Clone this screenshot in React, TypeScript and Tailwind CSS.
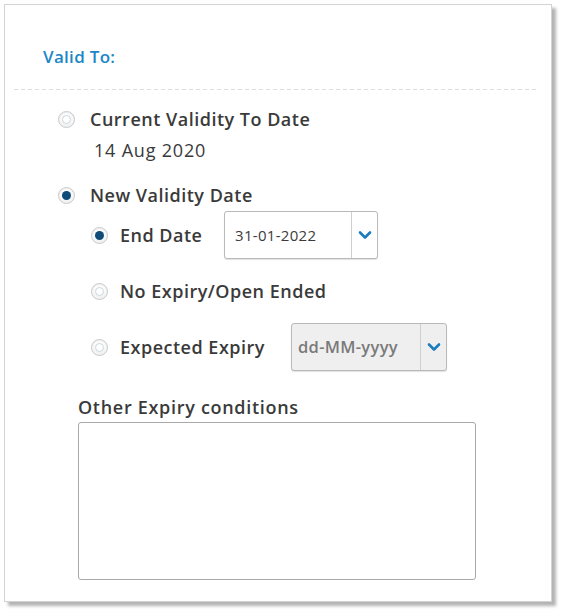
const font = { fontFamily: '"Open Sans", "Liberation Sans", sans-serif' }

function Radio({ checked }: { checked?: boolean }) {
  return (
    <span className="inline-flex size-[17px] shrink-0 items-center justify-center rounded-full border border-[#c9c9c9] bg-gradient-to-b from-white to-[#f1f1f1] shadow-[inset_0_1px_1px_rgba(0,0,0,0.08)]">
      {checked ? (
        <span className="size-[9px] rounded-full bg-[#0e4b79]" />
      ) : (
        <span className="size-[9px] rounded-full border-[1.5px] border-[#c9d7e0] bg-white" />
      )}
    </span>
  )
}

function Chevron() {
  return (
    <svg width="14" height="10" viewBox="0 0 14 10" fill="none">
      <path d="M2 2.5 L7 7.5 L12 2.5" stroke="#1b7cbf" strokeWidth="2.6" strokeLinecap="round" strokeLinejoin="round" />
    </svg>
  )
}

function DateSelect({ value, disabled, width }: { value: string; disabled?: boolean; width: string }) {
  return (
    <div
      className={`flex h-[48px] items-stretch rounded-[3px] border border-[#b9b9b9] shadow-[0_1px_1px_rgba(0,0,0,0.12)] ${width} ${
        disabled ? 'bg-[#efefef]' : 'bg-white'
      }`}
    >
      <div
        className={`flex flex-1 items-center ${
          disabled
            ? 'pl-[6px] text-[16.5px] font-semibold tracking-[0.3px] text-[#7a7a7a]'
            : 'pl-[10px] text-[15px] tracking-[0.3px] text-[#3b3b3b]'
        }`}
      >
        {value}
      </div>
      <div className="flex w-[26px] items-center justify-center border-l border-[#cfcfcf]">
        <Chevron />
      </div>
    </div>
  )
}

export default function App() {
  return (
    <div className="min-h-[616px] bg-white" style={font}>
      <div className="ml-[4px] mt-[4px] h-[598px] w-[548px] border border-[#d3d3d3] bg-white shadow-[4px_4px_3px_#b4b4b4]">
        <div className="pl-[38px] pt-[42px] text-[17px] font-semibold leading-[20px] tracking-[0.3px] text-[#1c87c7]">
          Valid To:
        </div>

        <div className="ml-[9px] mr-[14px] mt-[22px] h-px bg-[repeating-linear-gradient(90deg,#dddddd_0_4px,transparent_4px_7px)]" />

        <div className="pl-[53px] text-[18px] tracking-[0.5px] text-[#3a3a3a]">
          <div className="mt-[17px] flex h-[24px] items-center gap-[15px]">
            <Radio />
            <span className="font-semibold">Current Validity To Date</span>
          </div>
          <div className="mt-[7px] flex h-[24px] items-center pl-[36px] tracking-[0.8px]">14 Aug 2020</div>

          <div className="mt-[21px] flex h-[24px] items-center gap-[15px]">
            <Radio checked />
            <span className="font-semibold">New Validity Date</span>
          </div>

          <div className="pl-[33px]">
            <div className="mt-[4px] flex h-[48px] items-center">
              <Radio checked />
              <span className="ml-[12px] w-[104px] font-semibold">End Date</span>
              <DateSelect value="31-01-2022" width="w-[154px]" />
            </div>

            <div className="mt-[20px] flex h-[24px] items-center">
              <Radio />
              <span className="ml-[12px] font-semibold">No Expiry/Open Ended</span>
            </div>

            <div className="mt-[19px] flex h-[50px] items-center">
              <Radio />
              <span className="ml-[12px] w-[171px] font-semibold">Expected Expiry</span>
              <DateSelect value="dd-MM-yyyy" width="w-[156px]" disabled />
            </div>
          </div>

          <div className="ml-[20px] mt-[23px]">
            <div className="font-semibold leading-[24px] tracking-[0.7px]">Other Expiry conditions</div>
            <textarea className="mt-[3px] block h-[158px] w-[398px] resize-none rounded-[3px] border border-[#a9a9a9] bg-white outline-none" />
          </div>
        </div>
      </div>
    </div>
  )
}
